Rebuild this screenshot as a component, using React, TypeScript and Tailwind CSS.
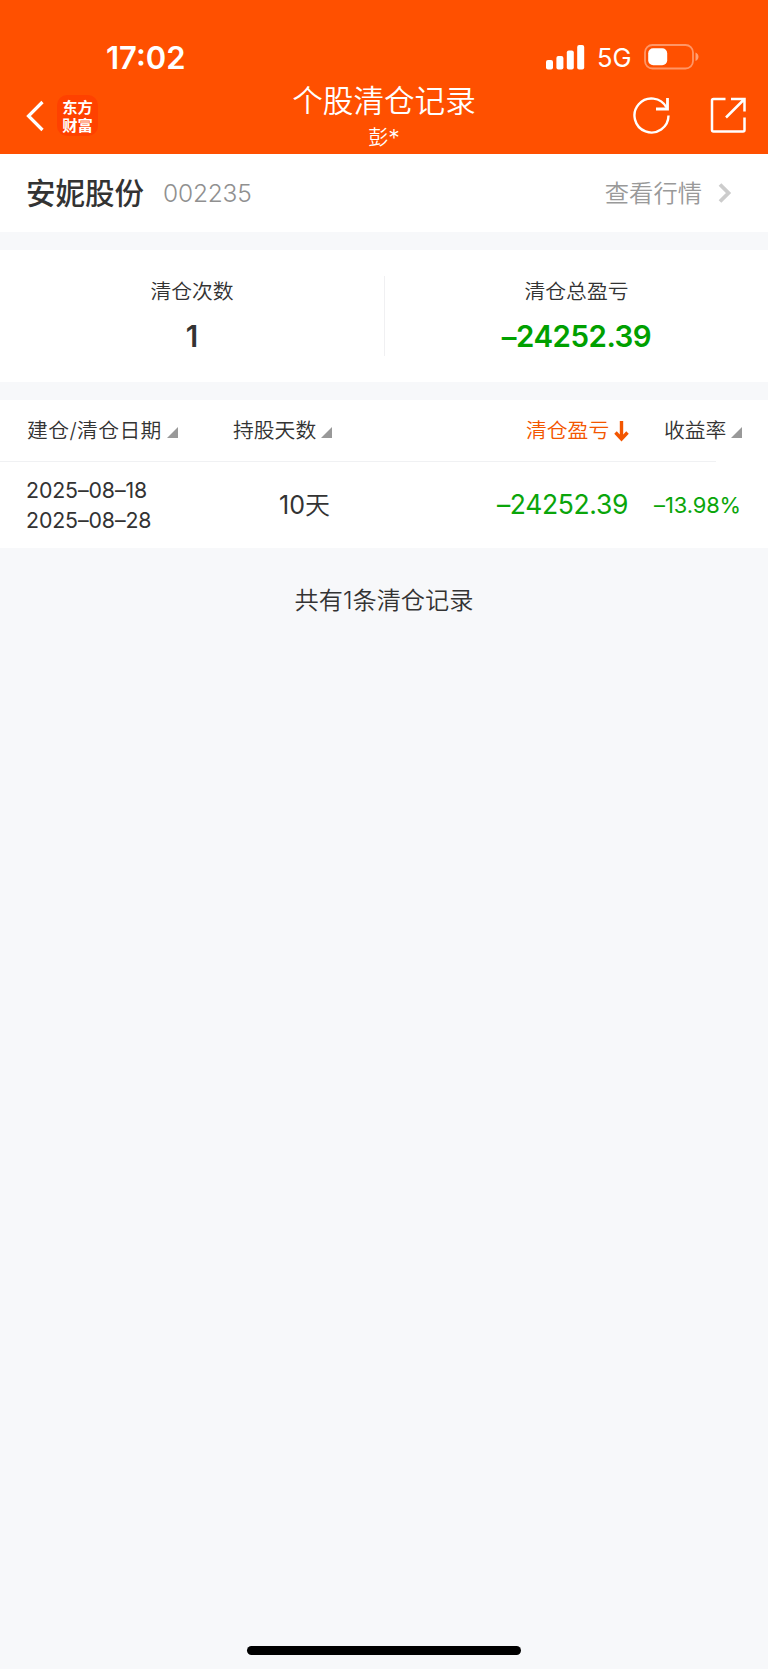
import { useState } from 'react';
import clsx from 'clsx';

type TradeRecord = { id: number; open: string; close: string; days: number; profit: string; rate: string };

const stock = { name: '安妮股份', code: '002235', owner: '彭', total: '–24252.39' };

const records: TradeRecord[] = [
  { id: 1, open: '2025–08–18', close: '2025–08–28', days: 10, profit: '–24252.39', rate: '–13.98%' },
];

const columns = [
  { key: 'date', label: '建仓/清仓日期', cell: 'w-[206px] tracking-[0.4px]' },
  { key: 'days', label: '持股天数', cell: 'w-[293px]' },
  { key: 'profit', label: '清仓盈亏', cell: 'w-[138px]' },
  { key: 'rate', label: '收益率', cell: '' },
];

function StatusBar() {
  return (
    <div className="flex h-[76px] items-end justify-between pl-[106px] pr-[68px]">
      <span className="h-[38px] text-[31px] leading-[39px] font-semibold">17:02</span>
      <div className="flex h-[39px] items-center">
        <svg width="39" height="26" viewBox="0 0 39 26" fill="currentColor">
          <rect x="0" y="16" width="7" height="9.5" rx="2" />
          <rect x="10.4" y="12" width="7" height="13.5" rx="2" />
          <rect x="20.8" y="6.5" width="7" height="19" rx="2" />
          <rect x="31.2" y="1" width="7" height="24.5" rx="2" />
        </svg>
        <span className="mt-[4px] ml-[12px] w-[47px] text-[25.500px]">5G</span>
        <svg width="56" height="26" viewBox="0 0 56 26" fill="none">
          <rect x="1" y="1" width="48" height="23.5" rx="7.5" stroke="white" strokeOpacity="0.4" strokeWidth="1.8" />
          <rect x="4.2" y="4.2" width="19" height="17" rx="5" fill="white" />
          <path d="M51.500 8.500c4 1.500 4 7 0 8.500z" fill="white" fillOpacity="0.45" />
        </svg>
      </div>
    </div>
  );
}

function NavBar() {
  return (
    <div className="flex h-[78px] justify-between">
      <div className="flex w-[240px] items-start pl-[24px] pt-[19px]">
        <button className="mt-[5px]">
          <svg width="20" height="32" viewBox="0 0 20 32" fill="none" stroke="currentColor" strokeWidth="3.200">
            <path d="M18.500 2 4.500 16l14 14" />
          </svg>
        </button>
        <div className="ml-[13px] flex h-[41px] w-[41px] items-center justify-center rounded-[10px] bg-[#ff4100] font-['Noto_Sans_CJK_SC',sans-serif] text-[15.300px] leading-[17.500px] font-bold">
          <p className="w-[31px] text-center break-all">东方财富</p>
        </div>
      </div>
      <div className="flex flex-col items-center font-['Noto_Sans_CJK_SC',sans-serif]">
        <h1 className="mt-px h-[48px] text-[30.600px] leading-[44px] font-[350]">个股清仓记录</h1>
        <span className="flex text-[20px] leading-[24px] font-[350]">
          {stock.owner}
          <span className="mt-px font-['Inter',sans-serif] text-[23px] font-light">*</span>
        </span>
      </div>
      <div className="flex w-[240px] items-start justify-end pr-[22px] pt-[20px]">
        <button>
          <svg width="38" height="38" viewBox="0 0 38 38" fill="none" stroke="currentColor" strokeWidth="2.400">
            <path d="M36.500 19.500A17 17 0 1 1 34.500 11.500" />
            <path d="M35.500 2v11H24" strokeWidth="2.800" />
          </svg>
        </button>
        <button className="ml-[38px]">
          <svg width="38" height="38" viewBox="0 0 38 38" fill="none" stroke="currentColor" strokeWidth="2.500">
            <path d="M17.500 3H5.500Q4 3 4 4.500V34q0 1.500 1.500 1.500H35q1.500 0 1.500-1.500V21.500" />
            <path d="M23 3h13.500v12.500M36 3.500 18 21.500" />
          </svg>
        </button>
      </div>
    </div>
  );
}

export default function App() {
  const [sortBy, setSortBy] = useState('profit');

  return (
    <main className="flex h-[1669px] w-[768px] flex-col overflow-hidden bg-[#f7f8fa] font-['Inter','Noto_Sans_CJK_SC',sans-serif] text-[#333]">
      <header className="h-[154px] shrink-0 bg-[#ff5000] text-white">
        <StatusBar />
        <NavBar />
      </header>

      {/* stock name */}
      <section className="flex h-[78px] items-center bg-white pl-[26px] pr-[36px]">
        <h2 className="text-[29.500px] leading-[40px] font-medium">{stock.name}</h2>
        <span className="ml-[19px] text-[24.500px] font-light tracking-[-0.2px] text-[#909090]">{stock.code}</span>
        <button className="ml-auto flex items-center text-[#999]">
          <span className="text-[24.300px] leading-[36px] font-[350]">查看行情</span>
          <svg className="ml-[16px]" width="14" height="20" viewBox="0 0 14 20" fill="none" stroke="#ccc" strokeWidth="3.800">
            <path d="M2 1.500 10.500 10 2 18.500" />
          </svg>
        </button>
      </section>

      {/* totals */}
      <section className="mt-[18px] flex h-[132px] bg-white py-[26px]">
        <div className="flex w-[385px] flex-col items-center border-r border-[#f0f0f2]">
          <span className="mt-px text-[20.800px] leading-[30px] font-[350]">清仓次数</span>
          <strong className="mt-[11px] text-[29.500px] leading-[36px] font-semibold">{records.length}</strong>
        </div>
        <div className="flex flex-1 flex-col items-center">
          <span className="mt-px text-[20.800px] leading-[30px] font-[350]">清仓总盈亏</span>
          <strong className="mt-[11px] text-[29.500px] leading-[36px] font-semibold tracking-[-0.5px] text-[#00a000]">{stock.total}</strong>
        </div>
      </section>

      {/* record table */}
      <section className="mt-[18px] bg-white">
        <div className="flex h-[61px] items-center pl-[27px]">
          {columns.map((col) => (
            <button
              key={col.key}
              onClick={() => setSortBy(col.key)}
              className={clsx('flex items-center text-[20.800px] leading-[30px] font-[350]', col.cell, sortBy === col.key && 'text-[#f35600]')}
            >
              {col.label}
              {sortBy === col.key ? (
                <svg className="ml-[5px]" width="15" height="22" viewBox="0 0 15 22" fill="none" stroke="currentColor" strokeWidth="3.400">
                  <path d="M7.500 1v18M1.500 12.500l6 6.500 6-6.500" />
                </svg>
              ) : (
                <svg className="mt-[4px] ml-[5px]" width="11" height="11" viewBox="0 0 11 11" fill="#999">
                  <path d="M11 0v11H0z" />
                </svg>
              )}
            </button>
          ))}
        </div>
        <div className="h-px w-[716px] bg-[#f0f1f3]" />
        {records.map((r) => (
          <div key={r.id} className="flex h-[86px] items-center pl-[26px] pr-[27px]">
            <div className="flex w-[200px] flex-col text-[21.300px] leading-[30px] tracking-[-0.1px]">
              <span>{r.open}</span>
              <span>{r.close}</span>
            </div>
            <span className="mt-px w-[104px] text-right text-[25px]">
              {r.days}
              <span className="font-[350]">天</span>
            </span>
            <span className="w-[298px] text-right text-[26.500px] tracking-[-0.350px] text-[#0aa50a]">{r.profit}</span>
            <span className="ml-auto text-[21.900px] tracking-[-0.1px] text-[#0aa50a]">{r.rate}</span>
          </div>
        ))}
      </section>

      <p className="mt-[35px] text-center text-[24.200px] leading-[36px] font-[350]">共有{records.length}条清仓记录</p>

      {/* home indicator */}
      <div className="mx-auto mt-auto mb-[14px] h-[9px] w-[274px] rounded-full bg-black" />
    </main>
  );
}
